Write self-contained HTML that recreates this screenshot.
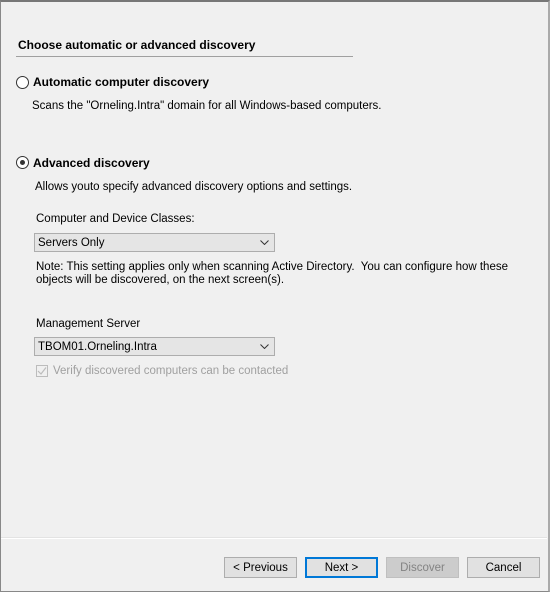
<!DOCTYPE html>
<html><head><style>
body{margin:0;width:550px;height:592px;overflow:hidden;background:#f0f0f0;font-family:"Liberation Sans",sans-serif;font-size:11.5px;color:#000;position:relative}
.frame{position:absolute;left:0;top:0;border:1px solid #888;border-top:2px solid #777;border-right:2px solid #aaa;box-sizing:border-box;width:550px;height:592px}
.a{position:absolute;white-space:nowrap}
.t{margin-top:1px}
.b{font-weight:bold;font-size:12px}
.radio{position:absolute;width:11px;height:11px;border:1px solid #333;border-radius:50%;background:#fff}
.radio .dot{position:absolute;left:3px;top:3px;width:5px;height:5px;border-radius:50%;background:#333}
.combo{position:absolute;height:19px;border:1px solid #adadad;background:#e5e5e5;box-sizing:border-box;padding-left:3px;line-height:19px}
.combo svg{position:absolute;right:5px;top:6px}
.btn{position:absolute;top:557px;width:73px;height:21px;box-sizing:border-box;border:1px solid #adadad;background:#e1e1e1;text-align:center;line-height:20px;font-size:11.5px}
</style></head><body>
<div class="frame"></div>
<div class="a b t" style="left:18px;top:37px">Choose automatic or advanced discovery</div>
<div class="a" style="left:16px;top:56px;width:337px;height:1px;background:#a0a0a0"></div>
<div class="radio" style="left:16px;top:76px"></div>
<div class="a b" style="left:33px;top:75px">Automatic computer discovery</div>
<div class="a t" style="left:32px;top:99px">Scans the "Orneling.Intra" domain for all Windows-based computers.</div>
<div class="radio" style="left:16px;top:156px"><div class="dot"></div></div>
<div class="a b" style="left:33px;top:156px">Advanced discovery</div>
<div class="a t" style="left:35px;top:180px">Allows youto specify advanced discovery options and settings.</div>
<div class="a t" style="left:36px;top:212px">Computer and Device Classes:</div>
<div class="combo" style="left:34px;top:233px;width:241px">Servers Only<svg width="9" height="5"><path d="M0.5 0.5L4.5 4.5L8.5 0.5" stroke="#333" fill="none"/></svg></div>
<div class="a t" style="left:36px;top:260px;line-height:13px">Note: This setting applies only when scanning Active Directory.&nbsp; You can configure how these<br>objects will be discovered, on the next screen(s).</div>
<div class="a t" style="left:36px;top:317px">Management Server</div>
<div class="combo" style="left:34px;top:337px;width:241px">TBOM01.Orneling.Intra<svg width="9" height="5"><path d="M0.5 0.5L4.5 4.5L8.5 0.5" stroke="#333" fill="none"/></svg></div>
<div class="a" style="left:36px;top:365px;width:12px;height:12px;border:1px solid #bcbcbc;box-sizing:border-box;background:#f0f0f0"><svg width="12" height="12" style="position:absolute;left:-1px;top:-1px"><path d="M2 6L5 9L10 2.5" stroke="#bcbcbc" fill="none" stroke-width="1.2"/></svg></div>
<div class="a t" style="left:53px;top:364px;color:#a0a0a0">Verify discovered computers can be contacted</div>
<div class="a" style="left:1px;top:538px;width:546px;height:1px;background:#fff"></div>
<div class="a" style="left:1px;top:537px;width:546px;height:1px;background:#e3e3e3"></div>
<div class="btn" style="left:224px">&lt; Previous</div>
<div class="btn" style="left:305px;border:2px solid #0078d7;line-height:18px">Next &gt;</div>
<div class="btn" style="left:386px;background:#cccccc;border-color:#bfbfbf;color:#838383">Discover</div>
<div class="btn" style="left:467px">Cancel</div>
</body></html>
